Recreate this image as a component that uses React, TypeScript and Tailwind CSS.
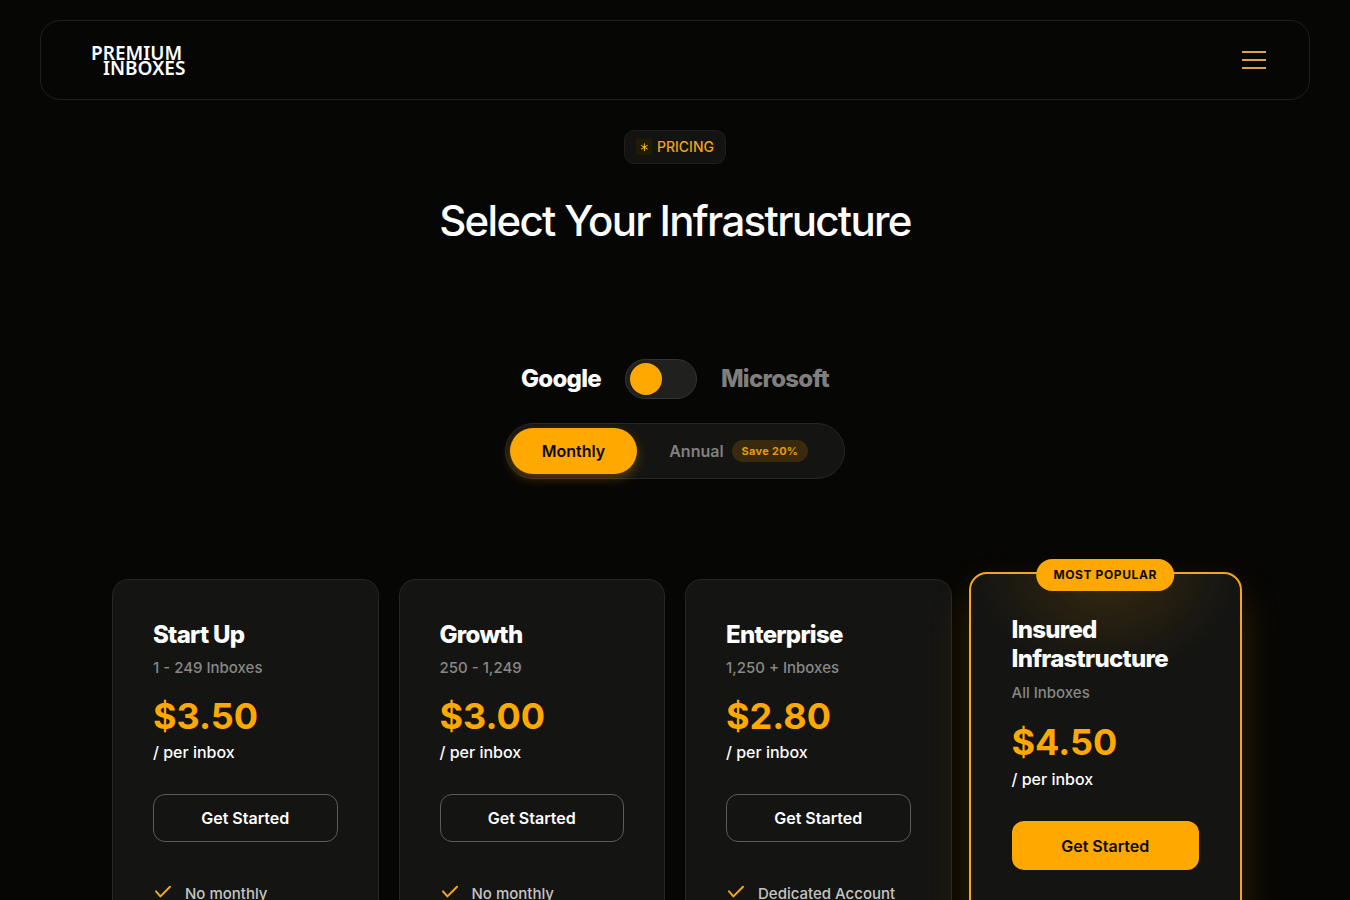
import { useState } from "react";

type Plan = {
  name: string;
  range: string;
  price: string;
  feature: string;
};

const plans: Plan[] = [
  { name: "Start Up", range: "1 - 249 Inboxes", price: "$3.50", feature: "No monthly" },
  { name: "Growth", range: "250 - 1,249", price: "$3.00", feature: "No monthly" },
  { name: "Enterprise", range: "1,250 + Inboxes", price: "$2.80", feature: "Dedicated Account" },
];

function Header() {
  return (
    <header className="mx-10 flex h-20 items-center justify-between rounded-[20px] border border-[#1f1f1d] pr-[43px] pl-[50px]">
      <a href="#" className="pt-0.5 font-['Noto_Sans',sans-serif] text-[19px] leading-[15px] font-semibold text-white">
        <span className="block">PREMIUM</span>
        <span className="block pl-3">INBOXES</span>
      </a>
      <button type="button" aria-label="Menu" className="flex w-6 flex-col gap-1.5">
        <span className="h-0.5 bg-[#dba44a]" />
        <span className="h-0.5 bg-[#dba44a]" />
        <span className="h-0.5 bg-[#dba44a]" />
      </button>
    </header>
  );
}

function PricingTag() {
  return (
    <div className="flex h-[34px] items-center gap-[5px] rounded-[10px] border border-[#1e1e1b] bg-[#131311] px-[11px] text-[14px] leading-5 font-medium text-[#f0a412]">
      <span className="flex size-4 items-center justify-center bg-[#211b05]">
        <svg viewBox="0 0 16 16" className="size-4" fill="none" stroke="#ffc02e" strokeLinecap="round" aria-hidden="true">
          <path d="M8.4 4.8V11.6M5.5 6.6 11.3 9.9M11.3 6.6 5.5 9.9" />
        </svg>
      </span>
      PRICING
    </div>
  );
}

function PlanCard({ plan }: { plan: Plan }) {
  return (
    <article className="rounded-2xl border border-[#262624] bg-[#141412] p-10">
      <h2 className="text-[24px] leading-[29px] font-extrabold tracking-[-0.03em] text-white">{plan.name}</h2>
      <p className="mt-2 text-[15px] leading-[22px] font-medium text-[#888887]">{plan.range}</p>
      <p className="mt-4 text-[36px] leading-[42px] font-bold text-[#ffa800]">{plan.price}</p>
      <p className="mt-[3px] text-[16px] leading-6 font-medium text-white">/ per inbox</p>
      <button
        type="button"
        className="mt-[30px] h-12 w-full rounded-xl border border-[#5b5b5a] text-[16px] font-semibold text-white"
      >
        Get Started
      </button>
      <ul className="mt-10 text-[15px] leading-6 font-medium text-[#c4c4c3]">
        <li className="flex gap-3">
          <svg
            viewBox="0 0 20 20"
            className="size-5 shrink-0"
            fill="none"
            stroke="#f5a817"
            strokeWidth="2"
            strokeLinecap="round"
            strokeLinejoin="round"
            aria-hidden="true"
          >
            <path d="M3 9.3 7.4 14.4 17 4.8" />
          </svg>
          {plan.feature}
        </li>
      </ul>
    </article>
  );
}

function FeaturedCard() {
  return (
    <article className="relative -mt-[7px] -mr-1 -ml-[3px] rounded-[18px] border-2 border-[#f5a51c] bg-[#141412] bg-[radial-gradient(ellipse_130px_100px_at_50%_0%,rgba(255,168,0,0.14),transparent)] p-[41px] shadow-[0_20px_40px_rgba(255,168,0,0.18)]">
      <span className="absolute -top-[15px] left-1/2 flex h-8 -translate-x-1/2 items-center rounded-full bg-[#ffa800] px-[17px] text-[12px] font-bold tracking-wider whitespace-nowrap text-[#0a0a08]">
        MOST POPULAR
      </span>
      <h2 className="text-[24px] leading-[29px] font-extrabold tracking-[-0.03em] text-white">Insured Infrastructure</h2>
      <p className="mt-[9px] text-[15px] leading-[22px] font-medium text-[#888887]">All Inboxes</p>
      <p className="mt-[17px] text-[36px] leading-[43px] font-bold text-[#ffa800]">$4.50</p>
      <p className="mt-[3px] text-[16px] leading-6 font-medium text-white">/ per inbox</p>
      <button
        type="button"
        className="mt-[30px] h-[49px] w-full rounded-xl bg-[#ffa800] text-[16px] font-semibold text-[#0a0a08]"
      >
        Get Started
      </button>
    </article>
  );
}

export default function App() {
  const [microsoft, setMicrosoft] = useState(false);
  const [annual, setAnnual] = useState(false);

  return (
    <div className="min-h-screen bg-[#060604] pt-5 pb-20 font-['Inter',sans-serif]">
      <Header />
      <main className="flex flex-col items-center pt-[30px]">
        <PricingTag />
        <h1 className="mt-8 text-[42px] leading-[50px] font-medium tracking-[-0.04em] text-white">
          Select Your Infrastructure
        </h1>

        <div className="mt-[113px] flex items-center gap-6 text-[24px] leading-10 font-extrabold tracking-[-0.03em]">
          <span className={microsoft ? "text-[#7f7f7e]" : "text-white"}>Google</span>
          <button
            type="button"
            role="switch"
            aria-checked={microsoft}
            aria-label="Use Microsoft inboxes"
            onClick={() => setMicrosoft(!microsoft)}
            className={`flex h-10 w-[72px] items-center rounded-full border border-[#343432] bg-[#20201f] px-1 ${microsoft ? "justify-end" : "justify-start"}`}
          >
            <span className="size-8 rounded-full bg-[#ffa800]" />
          </button>
          <span className={microsoft ? "text-white" : "text-[#7f7f7e]"}>Microsoft</span>
        </div>

        <div className="mt-6 flex h-14 items-center rounded-full border border-[#262624] bg-[#141412] p-1 text-[16px]">
          <button
            type="button"
            aria-pressed={!annual}
            onClick={() => setAnnual(false)}
            className={`h-[46px] rounded-full px-8 font-semibold ${annual ? "text-[#80807f]" : "bg-[#ffa800] text-[#0a0a08] shadow-[0_4px_12px_rgba(255,168,0,0.3)]"}`}
          >
            Monthly
          </button>
          <button
            type="button"
            aria-pressed={annual}
            onClick={() => setAnnual(true)}
            className={`flex h-[46px] items-center gap-2 rounded-full px-8 font-semibold ${annual ? "bg-[#ffa800] text-[#0a0a08]" : "text-[#80807f]"}`}
          >
            Annual
            <span className="flex h-[22px] items-center rounded-full bg-[#3a2a0d] px-2.5 text-[11px] font-bold tracking-wide text-[#e69b0e]">
              Save 20%
            </span>
          </button>
        </div>

        <section className="mt-[100px] grid w-full grid-cols-4 gap-5 px-28">
          {plans.map((plan) => (
            <PlanCard key={plan.name} plan={plan} />
          ))}
          <FeaturedCard />
        </section>
      </main>
    </div>
  );
}
